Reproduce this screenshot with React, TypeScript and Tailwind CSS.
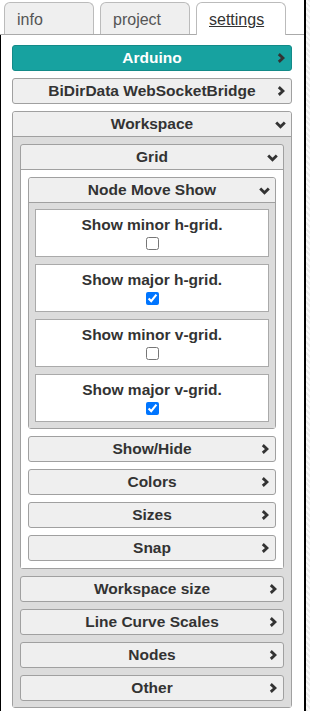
function ChevRight({ className = '' }: { className?: string }) {
  return (
    <svg width="8" height="10" viewBox="0 0 8 10" className={className}>
      <path d="M1.8 1.1 L6 5 L1.8 8.9" fill="none" stroke="#333" strokeWidth="2.8" />
    </svg>
  );
}

function ChevDown({ className = '' }: { className?: string }) {
  return (
    <svg width="11" height="8" viewBox="0 0 11 8" className={className}>
      <path d="M1.2 1.4 L5.5 5.7 L9.8 1.4" fill="none" stroke="#333" strokeWidth="2.8" />
    </svg>
  );
}

function Btn({ label, active = false }: { label: string; active?: boolean }) {
  return (
    <div
      className={`relative h-[26px] shrink-0 rounded-[3px] border flex items-center justify-center font-bold text-[15.5px] ${
        active ? 'bg-[#17a2a0] border-[#138a88] text-white' : 'bg-[#efefef] border-[#a0a0a0] text-[#333]'
      }`}
    >
      {label}
      <ChevRight className="absolute right-[6px] top-[7px]" />
    </div>
  );
}

function PanelHead({ label }: { label: string }) {
  return (
    <div className="relative h-[25px] shrink-0 bg-[#efefef] border-b border-[#a0a0a0] rounded-t-[3px] flex items-center justify-center font-bold text-[15.5px] text-[#333]">
      {label}
      <ChevDown className="absolute right-[5px] top-[9px]" />
    </div>
  );
}

function CheckItem({ label, checked }: { label: string; checked: boolean }) {
  return (
    <div className="h-[48px] shrink-0 bg-white border border-[#aaa] flex flex-col items-center pt-[5px] gap-[3px]">
      <span className="font-bold text-[15.5px] leading-[19px] text-[#333]">{label}</span>
      <input type="checkbox" defaultChecked={checked} className="w-[13px] h-[13px] m-0 accent-[#0075ff]" />
    </div>
  );
}

export default function App() {
  return (
    <div className="w-[310px] h-[711px] flex bg-white overflow-hidden font-['Liberation_Sans']">
      <div className="w-[304px] flex flex-col">
        {/* tabs */}
        <div className="h-[35px] shrink-0 flex items-end gap-[6px] pl-[4px] border-b border-[#aaa]">
          <div className="w-[90px] h-[32px] rounded-t-[6px] border border-b-0 border-[#bbb] bg-[#efefef] pl-[12px] pt-[5px] text-[16px] text-[#555]">info</div>
          <div className="w-[90px] h-[32px] rounded-t-[6px] border border-b-0 border-[#bbb] bg-[#efefef] pl-[12px] pt-[5px] text-[16px] text-[#555]">project</div>
          <div className="w-[90px] h-[33px] -mb-px rounded-t-[6px] border border-b-0 border-[#bbb] bg-white pl-[12px] pt-[5px] text-[16px] text-[#333] underline">settings</div>
        </div>

        {/* settings content */}
        <div className="flex-1 border-l border-black pl-[11px] pr-[12px] pt-[10px] flex flex-col gap-[7px]">
          <Btn label="Arduino" active />
          <Btn label="BiDirData WebSocketBridge" />

          {/* Workspace */}
          <div className="border border-[#a0a0a0] rounded-[3px] flex flex-col">
            <PanelHead label="Workspace" />
            <div className="bg-[#dcdcdc] p-[7px] pb-[6px] flex flex-col gap-[7px]">
              {/* Grid */}
              <div className="border border-[#a0a0a0] rounded-[3px] flex flex-col">
                <PanelHead label="Grid" />
                <div className="bg-white p-[7px] flex flex-col gap-[7px]">
                  {/* Node Move Show */}
                  <div className="border border-[#a0a0a0] rounded-[3px] flex flex-col">
                    <PanelHead label="Node Move Show" />
                    <div className="bg-[#dcdcdc] p-[6px] flex flex-col gap-[7px]">
                      <CheckItem label="Show minor h-grid." checked={false} />
                      <CheckItem label="Show major h-grid." checked />
                      <CheckItem label="Show minor v-grid." checked={false} />
                      <CheckItem label="Show major v-grid." checked />
                    </div>
                  </div>
                  <Btn label="Show/Hide" />
                  <Btn label="Colors" />
                  <Btn label="Sizes" />
                  <Btn label="Snap" />
                </div>
              </div>
              <Btn label="Workspace size" />
              <Btn label="Line Curve Scales" />
              <Btn label="Nodes" />
              <Btn label="Other" />
            </div>
          </div>
        </div>
      </div>
      <div className="w-[2px] bg-black" />
      <div className="flex-1 bg-[repeating-linear-gradient(45deg,#ececec_0px,#ececec_2px,#fafafa_2px,#fafafa_4px)]" />
    </div>
  );
}
